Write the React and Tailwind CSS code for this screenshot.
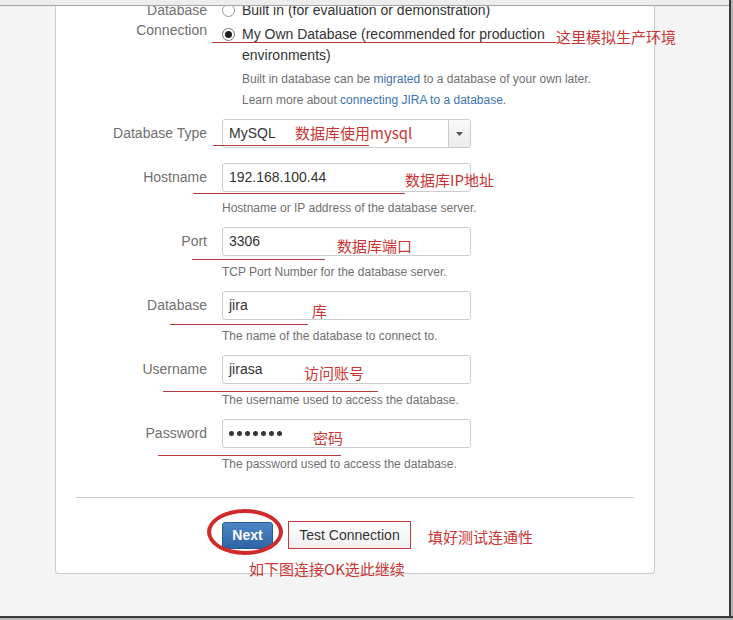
import React from 'react';

const font = "font-['Liberation_Sans','Noto_Sans_CJK_SC',sans-serif]";
const cjk = "font-['Noto_Sans_CJK_SC','Liberation_Sans',sans-serif]";

// one text field + help line
function Field({ label, value, help, dots = false }) {
  return (
    <div className="flex gap-[15px] mt-[10px] first:mt-0">
      <label className="w-[131px] h-[29px] leading-[29px] text-right text-[14px] text-[#707070]">{label}</label>
      <div className="flex flex-col">
        <div className="w-[249px] h-[29px] border border-[#cccccc] rounded-[3px] bg-white flex items-center px-[6px] text-[14px] text-[#333]">
          {dots ? (
            <span className="flex gap-[3px] items-center">
              {[0, 1, 2, 3, 4, 5, 6].map((i) => (
                <span key={i} className="w-[5px] h-[5px] rounded-full bg-[#333]" />
              ))}
            </span>
          ) : (
            value
          )}
        </div>
        <p className="mt-[7px] leading-[18px] text-[12px] text-[#707070]">{help}</p>
      </div>
    </div>
  );
}

// red hand-drawn annotations over the screenshot
function Note({ className, children }) {
  return <div className={`absolute text-[15px] leading-[22px] text-[#cc3434] whitespace-nowrap ${cjk} ${className}`}>{children}</div>;
}
function Line({ className }) {
  return <div className={`absolute h-px bg-[#b53b3b] ${className}`} />;
}

export default function App() {
  return (
    <div className={`relative w-[733px] h-[620px] overflow-hidden bg-[#f4f4f4] ${font}`}>
      {/* panel */}
      <div className="ml-[55px] w-[600px] bg-white border-x border-b border-[#cccccc] rounded-b-[4px] px-5 pb-[24px]">
        {/* database connection radios */}
        <div className="flex gap-[15px]">
          <div className="w-[131px] text-right text-[14px] leading-[20px] text-[#707070]">
            Database<br />Connection
          </div>
          <div className="flex flex-col">
            <div className="flex items-start gap-[7px]">
              <span className="mt-[4px] w-[13px] h-[13px] rounded-full border border-[#9a9a9a] bg-white" />
              <span className="text-[14px] leading-[21px] text-[#333]">Built in (for evaluation or demonstration)</span>
            </div>
            <div className="flex items-start gap-[7px] mt-[3px]">
              <span className="mt-[4px] w-[13px] h-[13px] rounded-full border border-[#777] bg-white flex items-center justify-center">
                <span className="w-[7px] h-[7px] rounded-full bg-[#222]" />
              </span>
              <span className="text-[14px] leading-[21px] text-[#333]">
                My Own Database (recommended for production<br />environments)
              </span>
            </div>
            <div className="ml-[20px] mt-[3px] text-[12px] leading-[21px] text-[#707070]">
              <p>Built in database can be <span className="text-[#3b73af]">migrated</span> to a database of your own later.</p>
              <p>Learn more about <span className="text-[#3b73af]">connecting JIRA to a database</span>.</p>
            </div>
          </div>
        </div>

        {/* database type */}
        <div className="flex items-center gap-[15px] mt-[8px]">
          <label className="w-[131px] text-right text-[14px] text-[#707070]">Database Type</label>
          <div className="w-[249px] h-[29px] border border-[#cccccc] rounded-[3px] flex bg-white">
            <div className="flex-1 flex items-center px-[6px] text-[14px] text-[#333]">MySQL</div>
            <div className="w-[22px] border-l border-[#cccccc] bg-gradient-to-b from-[#fafafa] to-[#ececec] flex items-center justify-center rounded-r-[3px]">
              <svg width="7" height="4" viewBox="0 0 7 4"><path d="M0 0h7L3.5 4z" fill="#555" /></svg>
            </div>
          </div>
        </div>

        <div className="mt-[15px] flex flex-col">
          <Field label="Hostname" value="192.168.100.44" help="Hostname or IP address of the database server." />
          <Field label="Port" value="3306" help="TCP Port Number for the database server." />
          <Field label="Database" value="jira" help="The name of the database to connect to." />
          <Field label="Username" value="jirasa" help="The username used to access the database." />
          <Field label="Password" dots help="The password used to access the database." />
        </div>

        <div className="mt-[24px] border-t border-[#cccccc]" />

        <div className="mt-[23px] ml-[146px] flex items-center gap-[15px]">
          <button className="w-[51px] h-[27px] rounded-[3px] border border-[#2a5a92] bg-gradient-to-b from-[#4d87c7] to-[#2d64a3] text-white text-[14px] font-bold">
            Next
          </button>
          <button className="w-[123px] h-[28px] border border-[#c23a3a] bg-gradient-to-b from-white to-[#f0f0f0] text-[#333] text-[14px]">
            Test Connection
          </button>
        </div>
      </div>

      {/* annotations */}
      <Line className="left-[212px] top-[42px] w-[344px]" />
      <Note className="left-[556px] top-[26px]">这里模拟生产环境</Note>
      <Line className="left-[213px] top-[145px] w-[156px]" />
      <Note className="left-[295px] top-[122px]">数据库使用mysql</Note>
      <Line className="left-[193px] top-[193px] w-[212px]" />
      <Note className="left-[405px] top-[169px]">数据库IP地址</Note>
      <Line className="left-[192px] top-[259px] w-[133px]" />
      <Note className="left-[337px] top-[235px]">数据库端口</Note>
      <Line className="left-[170px] top-[324px] w-[138px]" />
      <Note className="left-[312px] top-[300px]">库</Note>
      <Line className="left-[163px] top-[391px] w-[215px]" />
      <Note className="left-[304px] top-[362px]">访问账号</Note>
      <Line className="left-[158px] top-[455px] w-[183px]" />
      <Note className="left-[313px] top-[427px]">密码</Note>
      <div className="absolute left-[207px] top-[509px] w-[76px] h-[46px] rounded-[50%] border-[4px] border-[#d12a2a]" />
      <Note className="left-[428px] top-[526px]">填好测试连通性</Note>
      <Note className="left-[249px] top-[558px]">如下图连接OK选此继续</Note>

      {/* screenshot frame */}
      <div className="absolute top-0 left-0 w-full h-[6px] bg-[#ededed] border-b border-[#a5a5a5]" />
      <div className="absolute top-0 left-[729px] w-[4px] h-full border-l-2 border-[#3a3a3a] bg-[#b5b5b5]" />
      <div className="absolute top-[616px] left-0 w-full h-[4px] border-t-2 border-[#3a3a3a] bg-[#b5b5b5]" />
    </div>
  );
}
